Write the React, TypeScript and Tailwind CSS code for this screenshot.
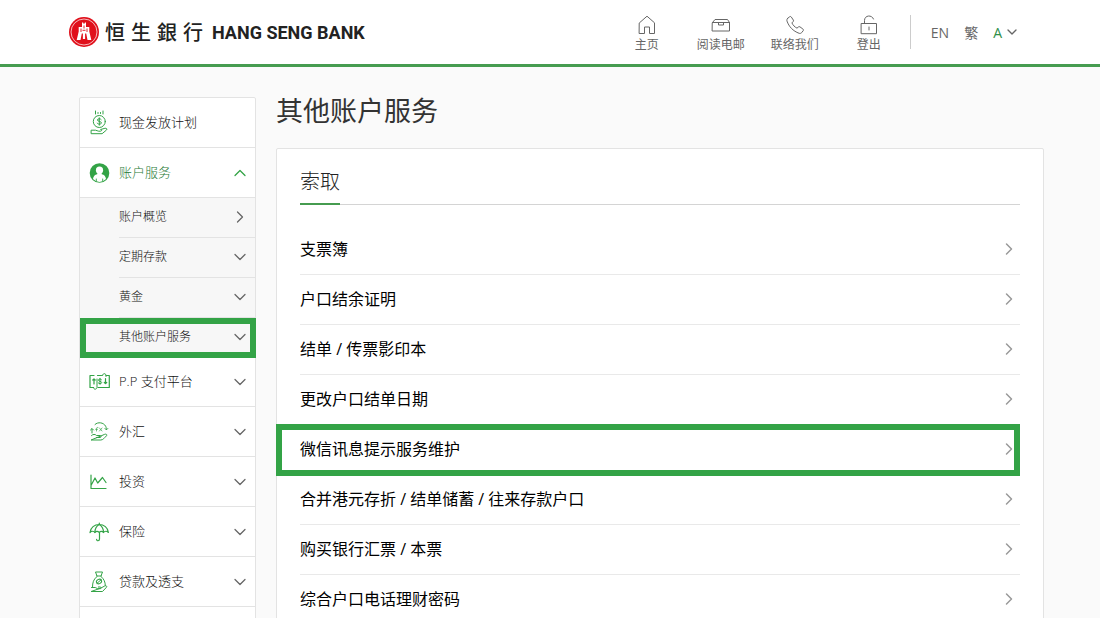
import type { ReactNode } from 'react';
import { ChevronDown, ChevronRight, ChevronUp } from 'lucide-react';

const svgProps = {
	fill: 'none',
	stroke: 'currentColor',
	strokeLinecap: 'round',
	strokeLinejoin: 'round',
	'aria-hidden': true,
} as const;

const Icon = ({ children }: { children: ReactNode }) => (
	<svg {...svgProps} viewBox="0 0 20 24" strokeWidth="1" className="h-6 w-5 shrink-0 overflow-visible">
		{children}
	</svg>
);

const TopIcon = ({ children }: { children: ReactNode }) => (
	<svg {...svgProps} viewBox="0 0 20 20" strokeWidth="1" className="size-5">
		{children}
	</svg>
);

const CashIcon = () => (
	<Icon>
		<path d="M6.500 0v3M9 1.500v1M11.500 1.500v1M14 0v3" />
		<circle cx="10.300" cy="10.500" r="6" />
		<path d="M12.300 8.600c-.6-1.200-3.900-1.200-3.900.4 0 1.700 4 1 4 2.900 0 1.700-3.500 1.700-4.200.3M10.300 6.800v7.400" />
		<path d="M2.500 19.200h4c1.300 0 2 1 3.200 1h1.600c1.700 0 1.700-1.600.3-1.700l4.300-1.200c1.500-.3 2.600.6 1.600 1.700l-4.400 3.700H2.500z" />
	</Icon>
);

const UserIcon = () => (
	<Icon>
		<circle cx="10.500" cy="12" r="9.800" fill="currentColor" stroke="none" />
		<circle cx="10.500" cy="9.200" r="3.600" fill="white" stroke="none" />
		<path fill="white" stroke="none" d="M8.500 12h4l.3 1.300c2.400.5 3.900 1.900 4.200 4.800a9 9 0 0 1-13 0c.3-2.900 1.800-4.300 4.200-4.800z" />
		<path d="M7.300 18v2M13.700 18v2" strokeWidth="0.900" />
	</Icon>
);

const PaymentIcon = () => (
	<Icon>
		<path d="M5 5.500H1v12h3.500M17 5.500h3.300v12H9M8.500 5.500h4" strokeWidth="1.200" />
		<path d="M5 14V9M3.800 10L5 8.800 6.200 10M16.500 8.500v5M15.300 12.500l1.200 1.200 1.200-1.200" strokeWidth="1.200" />
		<path d="M12.600 9.700c-.5-1-3.200-1-3.200.4 0 1.500 3.300.9 3.300 2.400s-2.800 1.500-3.500.4M11 8.300v6" />
		<path d="M4.500 17.500c0 2.300 3 2.300 3.500 0V9M13.500 5.500c0-2.500 3.500-2.500 3.500 0v1" />
	</Icon>
);

const FxIcon = () => (
	<Icon>
		<path d="M6 4.500C9 1.500 14.500 2.500 16.500 6c.6 1 .9 2 .9 3.500M16 8.500l1.400 1.400 1.400-1.400M3 13V9M1.500 10L3 8.500 4.500 10" />
		<path d="M7.500 11V8.500c0-1 .7-1.300 1.400-1M6.600 9.300h1.900M10.500 8l2.500 3M13 8l-2.500 3" strokeWidth="0.700" />
		<path d="M2.500 15.500c1.500-1.500 3.700-1.500 5 0h3.500c1.500.2 1.400 2 0 2H7.500M11.800 16l3.900-1.700c1.700-.6 2.800.6 1.600 1.700-1.900 1.800-3.200 4-5.500 4H2.500z" />
	</Icon>
);

const InvestIcon = () => (
	<Icon>
		<path d="M2 5V18.500H17M2 15.500L6 8l2.700 5 4.800-5.500 3.500 5" strokeWidth="1.200" />
	</Icon>
);

const InsuranceIcon = () => (
	<Icon>
		<path d="M10.300 3v1.500M1 12.500C1.500 7.500 5.500 4.500 10.200 4.500s8.700 3 9.200 8c-1.500-1.700-3.700-1.700-4.900 0-1.100-1.500-3.100-1.500-4.300 0-1.200-1.500-3.200-1.500-4.300 0-1.200-1.700-3.400-1.700-4.900 0z" strokeWidth="1.200" />
		<path d="M5.900 12.500c0-3.500 1.700-6.500 4.300-8 2.600 1.500 4.300 4.500 4.300 8M10.500 12.500v6.500c0 2.300-2.900 2.300-2.900.3" strokeWidth="1.200" />
	</Icon>
);

const LoanIcon = () => (
	<Icon>
		<path d="M8 6L6.500 2h7L12 6M7.500 6h5" />
		<path d="M7.500 7C4.500 9.500 3.500 12.500 3.500 17M12.500 7c2.500 2.200 3.800 5 3.800 8.500" />
		<ellipse cx="10" cy="11.500" rx="2.700" ry="2.100" transform="rotate(-30 10 11.500)" />
		<path d="M8 13.300l4.200-3.600M2.500 17.500h3.700l2.500 1.200h2.600c1.200-.2 1-1.700-.1-1.700H9.300M12 18l3.700-2c1.700-.8 2.700.5 1.500 1.600L13.500 21.500H2.500z" />
	</Icon>
);

const HomeIcon = () => (
	<TopIcon>
		<path d="M2.500 7.800L10 1.200l7.500 6.600V18.500H12.500v-6.500h-5v6.500h-5z" />
	</TopIcon>
);

const MailIcon = () => (
	<TopIcon>
		<path d="M1.500 7.500L4 4.500h12.500L18.500 7.500v8.500h-17zM1.500 7.500h17M7.500 7.500v2.500h5V7.500" />
	</TopIcon>
);

const PhoneIcon = () => (
	<TopIcon>
		<path d="M2.700 3.300L4.600 1.800c.6-.5 1.300-.4 1.700.2l2 3c.4.600.3 1.200-.2 1.700L6.900 7.900c1 2.200 2.800 4.100 5.100 5.300l1.300-1.200c.5-.5 1.100-.5 1.700-.1l2.900 2.100c.6.500.7 1.100.3 1.700l-1.500 1.900c-.7.800-1.600 1-2.600.7C8 16 4 11.800 2 6.100c-.3-1.100-.1-2.100.7-2.800z" />
	</TopIcon>
);

const UnlockIcon = () => (
	<TopIcon>
		<path d="M2.500 8.500h15v10.200h-15zM5.500 8.500V5.500c0-5.500 7.500-6 9-1.500M10 12v3" />
	</TopIcon>
);

const topLinks = [
	{ label: '主页', icon: <HomeIcon /> },
	{ label: '阅读电邮', icon: <MailIcon /> },
	{ label: '联络我们', icon: <PhoneIcon /> },
	{ label: '登出', icon: <UnlockIcon /> },
];

const accountLinks = ['账户概览', '定期存款', '黄金', '其他账户服务'];

const otherMenus = [
	{ label: 'P.P 支付平台', icon: <PaymentIcon /> },
	{ label: '外汇', icon: <FxIcon /> },
	{ label: '投资', icon: <InvestIcon /> },
	{ label: '保险', icon: <InsuranceIcon /> },
	{ label: '贷款及透支', icon: <LoanIcon /> },
];

const requests = [
	'支票簿',
	'户口结余证明',
	'结单 / 传票影印本',
	'更改户口结单日期',
	'微信讯息提示服务维护',
	'合并港元存折 / 结单储蓄 / 往来存款户口',
	'购买银行汇票 / 本票',
	'综合户口电话理财密码',
];

const Header = () => (
	<header className="flex h-[67px] items-center justify-between border-b-3 border-[#469c50] bg-white pr-[80px] pl-[69px]">
		<a href="#home" className="flex items-center text-[#222]">
			<svg viewBox="0 0 30 30" className="size-[30px]" aria-hidden="true">
				<circle cx="15" cy="15" r="15" fill="#e0101b" />
				<circle cx="15" cy="15" r="13" fill="none" stroke="white" strokeWidth="0.700" />
				<path fill="white" d="M13 5.500h1.200v1h1.600v-1H17v4.500h3.300v4.500l2 8.500h-3.800l-1.300-6.500h-1.100V22h-2.200v-5.500h-1.100L11.500 23H7.700l2-8.500V10H13z" />
				<path d="M12 11.500v3.500M18 11.500v3.500M15 8.500v3M13.500 13.300h3" stroke="#e0101b" strokeWidth="0.900" />
			</svg>
			<span className="ml-[6px] flex gap-[6px] font-['Noto_Sans_CJK_TC',sans-serif] text-[20px] leading-6 font-medium">
				<span>恒</span>
				<span>生</span>
				<span>銀</span>
				<span>行</span>
			</span>
			<span className="ml-[9px] pt-[2px] font-['Roboto',sans-serif] text-[18px] leading-6 font-bold">HANG SENG BANK</span>
		</a>
		<div className="flex items-center text-[#666]">
			<nav className="flex pt-1">
				{topLinks.map(({ label, icon }) => (
					<a key={label} href="#top" className="flex w-[74px] flex-col items-center gap-[2px] text-[12px] leading-4">
						{icon}
						{label}
					</a>
				))}
			</nav>
			<div className="ml-1 flex h-[34px] items-center gap-[15px] border-l border-[#ccc] pl-5 text-[14px]">
				<a href="#en">EN</a>
				<a href="#tc">繁</a>
				<button type="button" aria-label="字体大小" className="flex items-center gap-[2px] text-[#2f8f4a]">
					A
					<ChevronDown className="size-4 text-[#666]" strokeWidth={2} />
				</button>
			</div>
		</div>
	</header>
);

const Sidebar = () => (
	<nav className="w-[177px] shrink-0 rounded-t-xs border border-[#e3e3e3] bg-white pb-12 text-[13px] font-light text-[#111]">
		<a href="#cash" className="flex h-[50px] items-center gap-[10px] border-b border-[#e3e3e3] pl-[9px]">
			<span className="text-[#33a346]"><CashIcon /></span>
			现金发放计划
		</a>
		<button
			type="button"
			aria-expanded="true"
			className="flex h-[50px] w-full items-center gap-[10px] border-b border-[#e3e3e3] pr-[5px] pl-[9px] text-[#1f7a35]"
		>
			<span className="text-[#33a346]"><UserIcon /></span>
			账户服务
			<ChevronUp className="ml-auto size-5 text-[#33a346]" strokeWidth={1.5} />
		</button>
		<ul className="bg-[#f7f7f7] pl-[39px] text-[12px]">
			{accountLinks.map((label, i) => {
				const last = i === accountLinks.length - 1;
				return (
					<li key={label} className={last ? 'relative' : 'border-b border-[#e3e3e3]'}>
						<a href="#account" className="flex h-[39px] items-center justify-between pr-[5px] pb-[2px]">
							{label}
							{i === 0 ? (
								<ChevronRight className="size-5 text-[#666]" strokeWidth={1.5} />
							) : (
								<ChevronDown className="size-5 text-[#666]" strokeWidth={1.5} />
							)}
						</a>
						{last && (
							<span className="pointer-events-none absolute top-0 -right-px -bottom-px -left-[39px] border-6 border-[#33a346]" />
						)}
					</li>
				);
			})}
		</ul>
		{otherMenus.map(({ label, icon }) => (
			<button
				key={label}
				type="button"
				aria-expanded="false"
				className="flex h-[50px] w-full items-center gap-[10px] border-b border-[#e3e3e3] pr-[5px] pl-[9px]"
			>
				<span className="text-[#33a346]">{icon}</span>
				{label}
				<ChevronDown className="ml-auto size-5 text-[#666]" strokeWidth={1.5} />
			</button>
		))}
	</nav>
);

export default function App() {
	return (
		<div className="min-h-screen bg-[#fafafa] font-['Open_Sans','Noto_Sans_CJK_SC',sans-serif]">
			<Header />
			<div className="flex items-start gap-5 pr-14 pl-[79px] pt-[30px]">
				<Sidebar />
				<main className="-mt-[4px] min-w-0 flex-1">
					<h1 className="text-[27px] leading-[36px] text-[#333]">其他账户服务</h1>
					<section className="mt-[19px] rounded-xs border border-[#e3e3e3] bg-white px-[23px] pt-[17px] pb-6">
						<div className="flex border-b border-[#d4d4d4]">
							<h2 className="-mb-px border-b-2 border-[#469c50] pb-[5px] text-[20px] leading-8 font-light text-[#222]">
								索取
							</h2>
						</div>
						<ul className="pt-5">
							{requests.map((label) => (
								<li key={label} className="relative border-b border-[#e9e9e9]">
									<a href="#request" className="flex h-[49px] items-center justify-between pr-px pb-[2px] text-[16px] leading-6 text-black">
										{label}
										<ChevronRight className="size-5 text-[#999]" strokeWidth={1.8} />
									</a>
									{label === '微信讯息提示服务维护' && (
										<span className="pointer-events-none absolute -top-px right-0 -bottom-[2px] -left-6 border-6 border-[#33a346]" />
									)}
								</li>
							))}
						</ul>
					</section>
				</main>
			</div>
		</div>
	);
}
